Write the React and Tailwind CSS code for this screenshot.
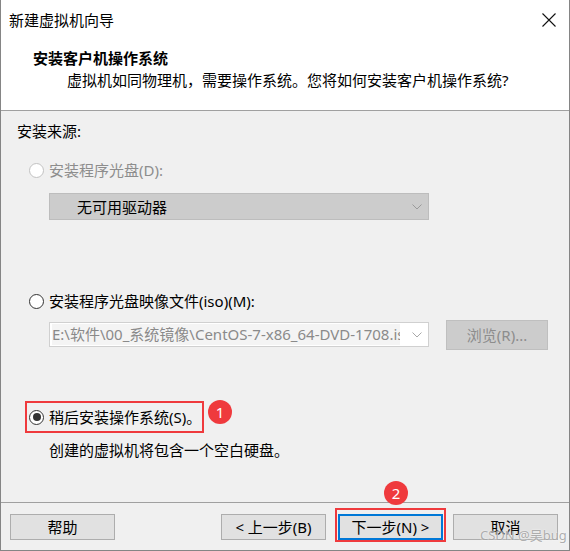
import React from 'react';

const FONT = { fontFamily: '"Noto Sans", "Noto Sans CJK SC", sans-serif' };

function Radio({ checked = false, disabled = false }) {
  return (
    <span
      className={`w-[15px] h-[15px] rounded-full border bg-white flex items-center justify-center shrink-0 ${
        disabled ? 'border-[#c2c2c2]' : 'border-[#333333]'
      }`}
    >
      {checked && <span className="w-[8px] h-[8px] rounded-full bg-[#333333]" />}
    </span>
  );
}

function Chevron({ color = '#8a8a8a' }) {
  return (
    <svg width="10" height="6" viewBox="0 0 10 6" className="shrink-0">
      <path d="M0.5 0.5 L5 5 L9.5 0.5" fill="none" stroke={color} strokeWidth="1" />
    </svg>
  );
}

function Badge({ n }) {
  return (
    <span className="w-[24px] h-[24px] rounded-full bg-[#ef3a3d] text-white text-[15px] leading-none flex items-center justify-center">
      {n}
    </span>
  );
}

function Button({ children, primary = false }) {
  return (
    <div
      className={`w-[105px] h-[26px] bg-[#e1e1e1] flex items-center justify-center text-[15px] leading-none text-black ${
        primary ? 'border-2 border-[#0078d7]' : 'border border-[#adadad]'
      }`}
    >
      {children}
    </div>
  );
}

export default function App() {
  return (
    <div
      className="w-[570px] h-[551px] bg-[#f0f0f0] border-x border-b border-[#858585] flex flex-col relative text-black"
      style={FONT}
    >
      {/* header */}
      <div className="h-[111px] bg-white border-b border-[#a0a0a0] flex flex-col shrink-0">
        <div className="h-[40px] pl-[8px] pr-[13px] flex items-center justify-between">
          <span className="text-[15px] leading-[20px]">新建虚拟机向导</span>
          <svg width="14" height="14" viewBox="0 0 14 14">
            <path d="M0.5 0.5 L13.5 13.5 M13.5 0.5 L0.5 13.5" stroke="#111" strokeWidth="1.1" />
          </svg>
        </div>
        <div className="mt-[8px] pl-[32px] text-[15px] leading-[20px] font-bold">安装客户机操作系统</div>
        <div className="mt-[2px] pl-[66px] text-[15px] leading-[20px]">
          虚拟机如同物理机，需要操作系统。您将如何安装客户机操作系统?
        </div>
      </div>

      {/* body */}
      <div className="h-[391px] flex flex-col text-[15px] leading-[20px]">
        <div className="mt-[10px] pl-[16px]">安装来源:</div>

        <div className="mt-[19px] pl-[28px] h-[20px] flex items-center gap-[5px]">
          <Radio disabled />
          <span className="text-[#8d8d8d]">安装程序光盘(D):</span>
        </div>

        <div className="mt-[13px] ml-[48px] w-[380px] h-[27px] bg-[#cccccc] border border-[#bdbdbd] flex items-center pl-[27px] pr-[6px]">
          <span className="flex-1">无可用驱动器</span>
          <Chevron color="#9a9a9a" />
        </div>

        <div className="mt-[71px] pl-[28px] h-[20px] flex items-center gap-[5px]">
          <Radio />
          <span>安装程序光盘映像文件(iso)(M):</span>
        </div>

        <div className="mt-[9px] pl-[48px] flex items-start gap-[17px]">
          <div className="mt-[2px] w-[380px] h-[25px] bg-white border border-[#d0d0d0] flex items-center pl-[2px] pr-[6px] gap-[12px]">
            <span className="flex-1 h-[21px] bg-[#f4f4f4] text-[#8a8a8a] whitespace-nowrap overflow-hidden leading-[21px]">
              E:\软件\00_系统镜像\CentOS-7-x86_64-DVD-1708.iso
            </span>
            <Chevron color="#a8a8a8" />
          </div>
          <div className="w-[102px] h-[30px] bg-[#cccccc] border border-[#bfbfbf] flex items-center justify-center text-[#8d8d8d]">
            浏览(R)...
          </div>
        </div>

        <div className="mt-[57px] ml-[28px] h-[20px] flex items-center gap-[5px] relative self-start">
          <Radio checked />
          <span>稍后安装操作系统(S)。</span>
          <div className="absolute left-[-4px] top-[-6px] w-[179px] h-[32px] border-2 border-[#ef3a3d]" />
          <div className="absolute left-[179px] top-[-7px]">
            <Badge n="1" />
          </div>
        </div>

        <div className="mt-[13px] pl-[48px]">创建的虚拟机将包含一个空白硬盘。</div>
      </div>

      {/* footer */}
      <div className="h-[48px] border-t border-[#a0a0a0] pt-[11px] pl-[9px] pr-[11px] flex items-start shrink-0">
        <Button>帮助</Button>
        <div className="flex-1" />
        <Button>&lt; 上一步(B)</Button>
        <div className="ml-[12px] relative">
          <Button primary>下一步(N) &gt;</Button>
          <div className="absolute left-[-3px] top-[-6px] w-[111px] h-[34px] border-2 border-[#ef3a3d]" />
          <div className="absolute left-[46px] top-[-33px]">
            <Badge n="2" />
          </div>
        </div>
        <div className="ml-[10px]">
          <Button>取消</Button>
        </div>
      </div>

      <div
        className="absolute left-[479px] top-[526px] text-[13px] leading-[18px] text-[#9a9a9a]/80 whitespace-nowrap"
        style={{ textShadow: '0 0 2px #ffffff' }}
      >
        CSDN @吴bug
      </div>
    </div>
  );
}
